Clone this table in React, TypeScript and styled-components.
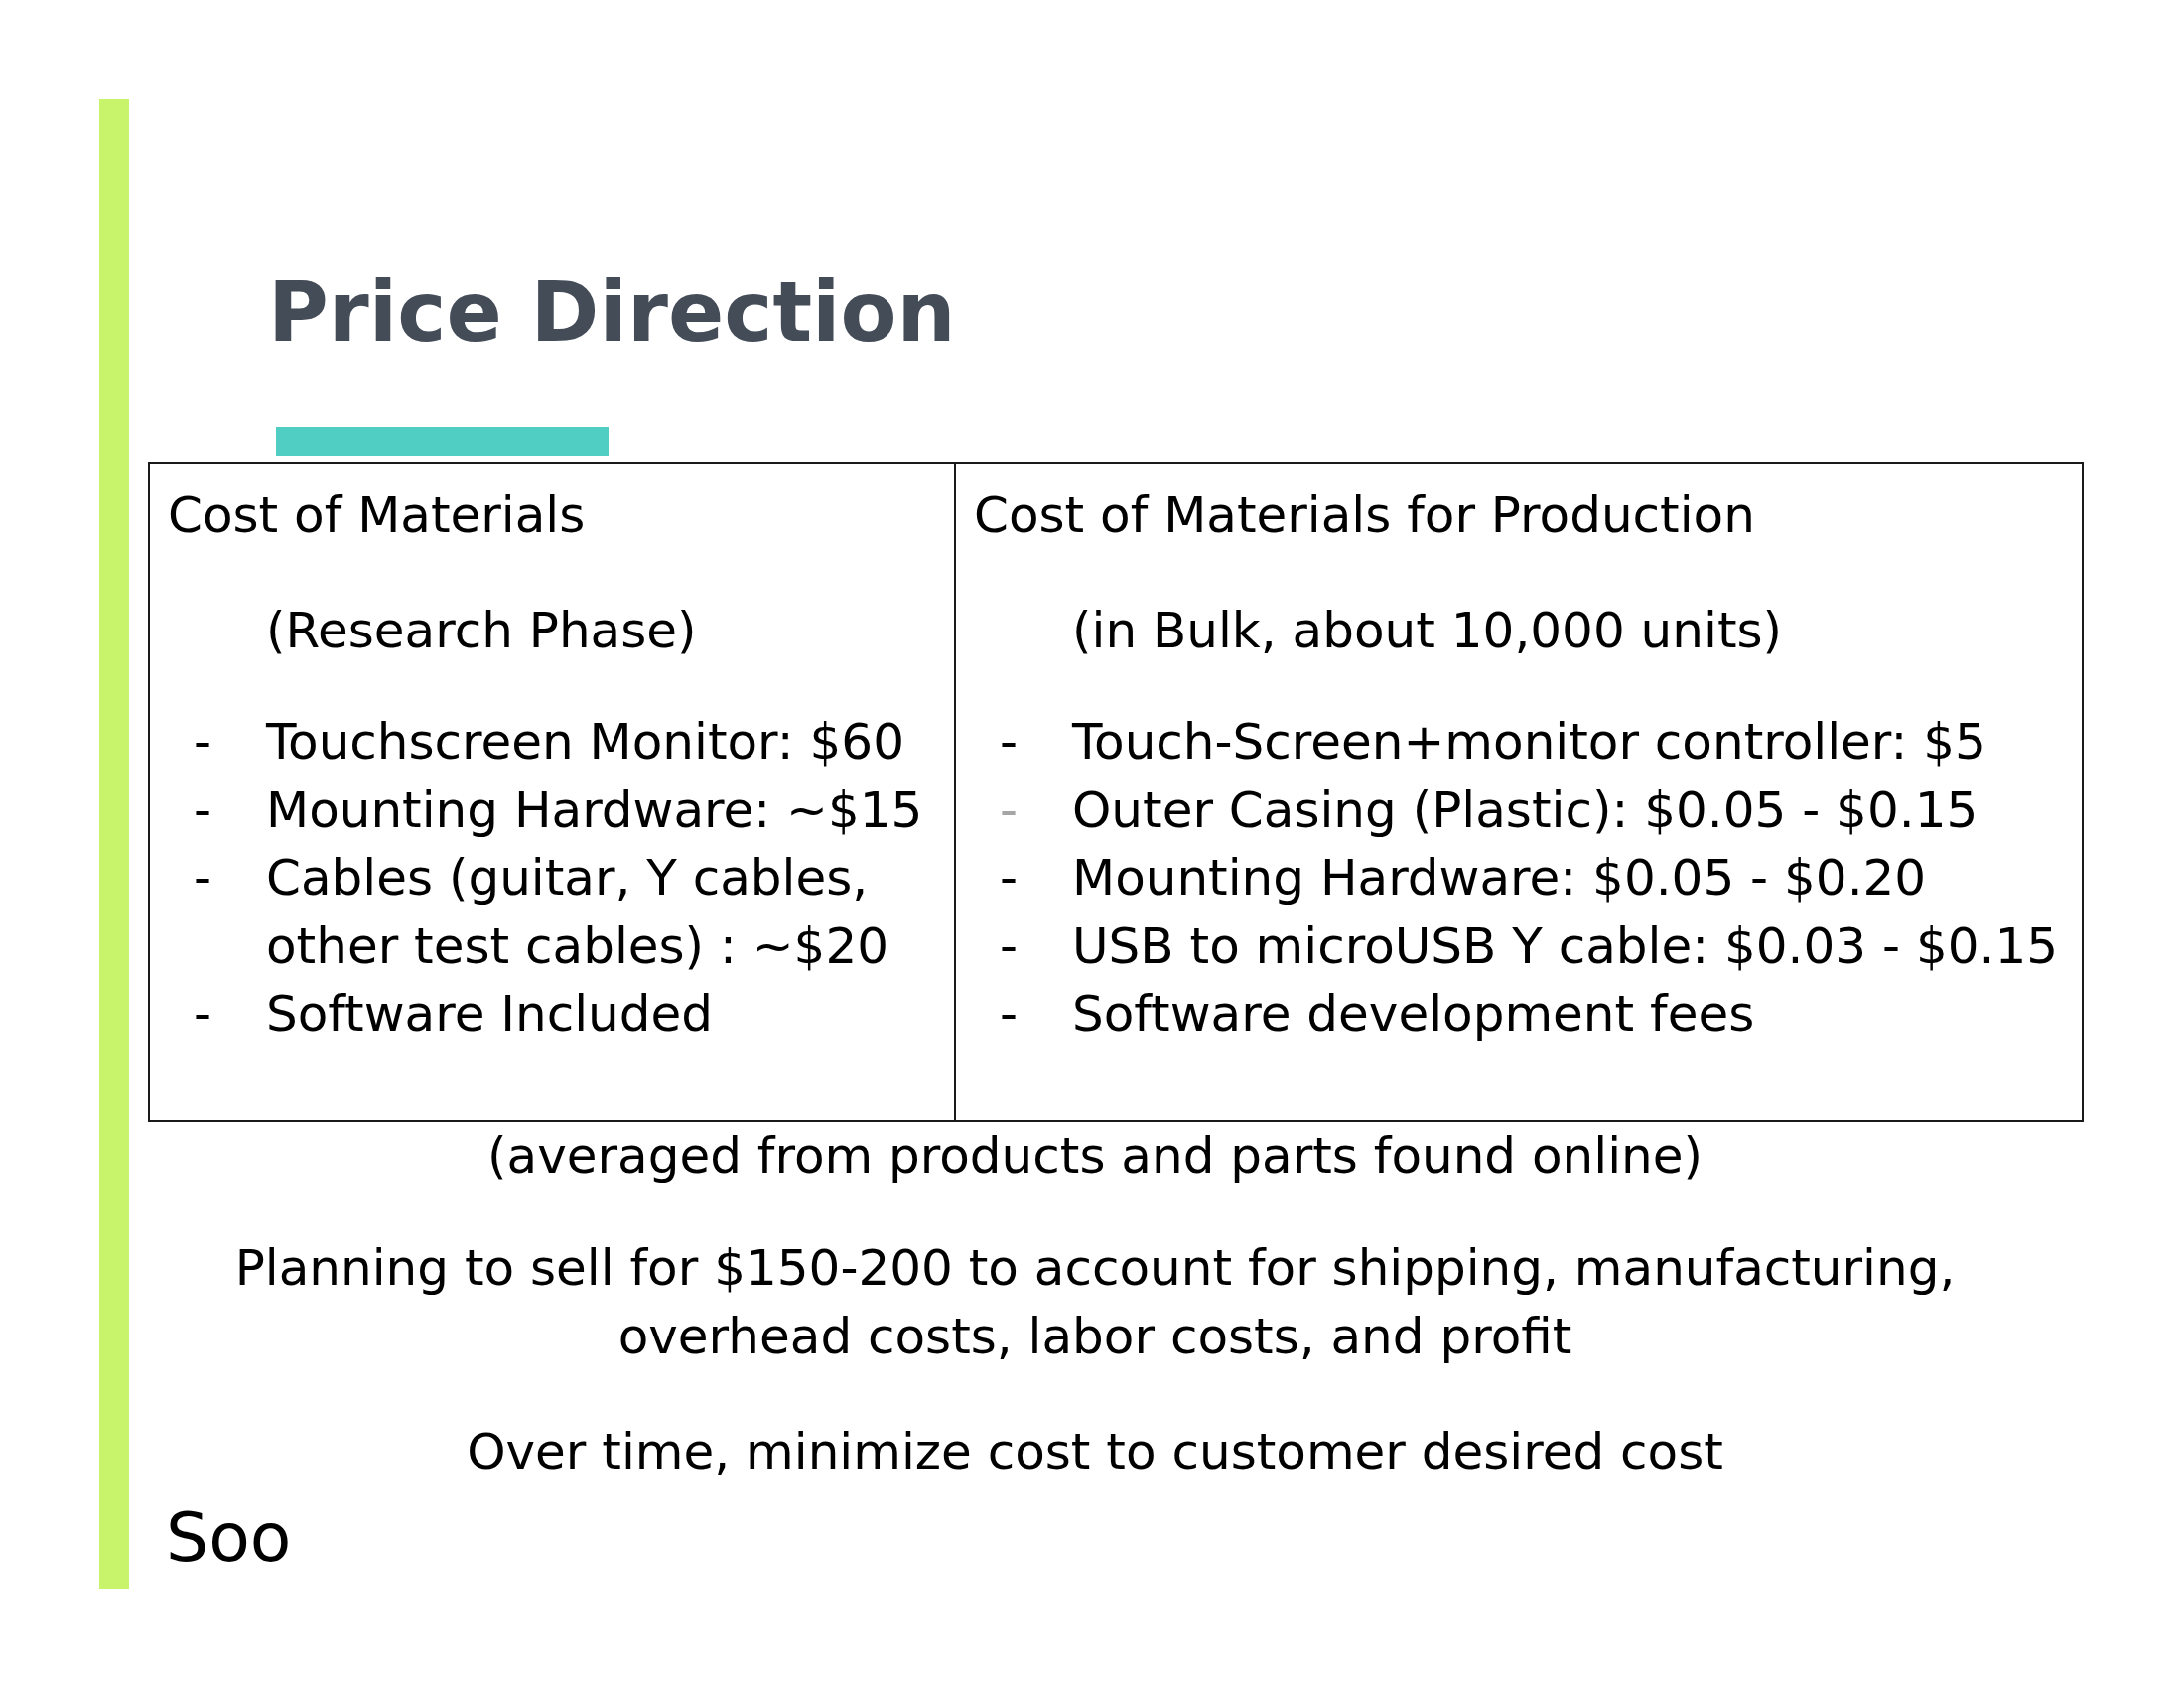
import styled, { createGlobalStyle } from 'styled-components';

const GlobalStyle = createGlobalStyle`
  html, body {
    margin: 0;
    padding: 0;
    background: #ffffff;
  }
  body {
    font-family: 'DejaVu Sans', 'Liberation Sans', sans-serif;
    color: #000;
  }
`;

type Item = { text: React.ReactNode; faded?: boolean };

const researchItems: Item[] = [
  { text: 'Touchscreen Monitor: $60' },
  { text: 'Mounting Hardware: ~$15' },
  {
    text: (
      <>
        Cables (guitar, Y cables,
        <br />
        other test cables) : ~$20
      </>
    ),
  },
  { text: 'Software Included' },
];

const productionItems: Item[] = [
  { text: 'Touch-Screen+monitor controller: $5' },
  { text: 'Outer Casing (Plastic): $0.05 - $0.15', faded: true },
  { text: 'Mounting Hardware: $0.05 - $0.20' },
  { text: 'USB to microUSB Y cable: $0.03 - $0.15' },
  { text: 'Software development fees' },
];

const App = () => {
  return (
    <>
      <GlobalStyle />
      <Slide>
        <AccentBar />
        <Content>
          <Title>Price Direction</Title>
          <TitleRule />
          <CostTable>
            <CostCell>
              <CellHeading>Cost of Materials</CellHeading>
              <CellSubheading>(Research Phase)</CellSubheading>
              <DashList>
                {researchItems.map((item, i) => (
                  <DashItem key={i}>
                    <Dash $faded={item.faded}>-</Dash>
                    <span>{item.text}</span>
                  </DashItem>
                ))}
              </DashList>
            </CostCell>
            <CostCell $divided>
              <CellHeading>Cost of Materials for Production</CellHeading>
              <CellSubheading>(in Bulk, about 10,000 units)</CellSubheading>
              <DashList>
                {productionItems.map((item, i) => (
                  <DashItem key={i}>
                    <Dash $faded={item.faded}>-</Dash>
                    <span>{item.text}</span>
                  </DashItem>
                ))}
              </DashList>
            </CostCell>
          </CostTable>
          <Note>(averaged from products and parts found online)</Note>
          <Note $gap={44}>
            Planning to sell for $150-200 to account for shipping, manufacturing,
            <br />
            overhead costs, labor costs, and profit
          </Note>
          <Note $gap={47}>Over time, minimize cost to customer desired cost</Note>
          <Aside>Soo</Aside>
        </Content>
      </Slide>
    </>
  );
};

const Slide = styled.div`
  width: 2200px;
  height: 1700px;
  box-sizing: border-box;
  padding: 100px 0 0 100px;
  display: flex;
  align-items: flex-start;
  background: #fff;
`;

const AccentBar = styled.div`
  width: 30px;
  height: 1500px;
  flex-shrink: 0;
  background: #c7f46b;
`;

const Content = styled.div`
  width: 1950px;
  margin-left: 19px;
  display: flex;
  flex-direction: column;
`;

const Title = styled.h1`
  margin: 174px 0 0 121px;
  font-family: 'DejaVu Sans', sans-serif;
  font-weight: 700;
  font-size: 83px;
  line-height: 82px;
  color: #444c58;
  white-space: nowrap;
`;

const TitleRule = styled.div`
  width: 335px;
  height: 29px;
  margin: 74px 0 0 129px;
  background: #50cec4;
`;

const CostTable = styled.div`
  margin-top: 6px;
  display: grid;
  grid-template-columns: 810px 1fr;
  border: 2px solid #1a1a1a;
`;

const CostCell = styled.div<{ $divided?: boolean }>`
  padding: 18px 18px 72px 18px;
  border-left: ${(p) => (p.$divided ? '2px solid #1a1a1a' : 'none')};
  font-size: 50px;
  line-height: 69px;
  white-space: nowrap;
`;

const CellHeading = styled.div``;

const CellSubheading = styled.div`
  margin: 47px 0 0 99px;
`;

const DashList = styled.ul`
  list-style: none;
  margin: 43px 0 0 0;
  padding: 0;
`;

const DashItem = styled.li`
  display: grid;
  grid-template-columns: 26px 73px 1fr;
  line-height: 68.5px;

  & > span {
    grid-column: 3;
  }
`;

const Dash = styled.span<{ $faded?: boolean }>`
  grid-column: 2 !important;
  color: ${(p) => (p.$faded ? '#a6a6a6' : '#000')};
`;

const Note = styled.p<{ $gap?: number }>`
  margin: ${(p) => p.$gap ?? 0}px 42px 0 0;
  font-size: 50px;
  line-height: 69px;
  text-align: center;
  white-space: nowrap;
`;

const Aside = styled.div`
  margin: 7px 0 0 18px;
  font-size: 68px;
  line-height: 90px;
`;

export default App;
